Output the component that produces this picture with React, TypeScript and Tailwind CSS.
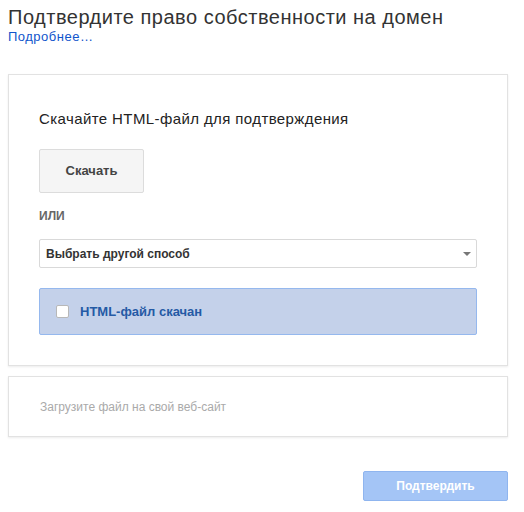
export default function App() {
  return (
    <div className="w-[524px] h-[512px] bg-white pl-2 pt-[5px] font-['Liberation_Sans',Arial,sans-serif]">
      <h1 className="text-[20px] leading-[24px] tracking-[0.5px] text-[#333] font-normal">
        Подтвердите право собственности на домен
      </h1>
      <a href="#" className="block w-fit text-[13px] leading-[16px] tracking-[0.5px] text-[#15c]">
        Подробнее…
      </a>

      <div className="mt-[29px] w-[500px] border border-[#e2e2e2] shadow-[0_1px_2px_rgba(0,0,0,0.08)] px-[30px] pt-[34px] pb-[30px]">
        <p className="text-[15px] leading-[20px] tracking-[0.4px] text-[#222]">
          Скачайте HTML-файл для подтверждения
        </p>
        <button className="mt-[20px] flex h-[44px] w-[105px] items-center justify-center rounded-[2px] border border-[#dcdcdc] bg-[#f5f5f5] text-[13px] font-bold text-[#444]">
          Скачать
        </button>
        <div className="mt-[15px] text-[12px] leading-[16px] font-bold uppercase text-[#666]">
          или
        </div>
        <div className="mt-[15px] flex h-[29px] items-center justify-between rounded-[2px] border border-[#d9d9d9] bg-white pl-[6px] pr-[5px]">
          <span className="text-[12px] font-bold text-[#333]">Выбрать другой способ</span>
          <span className="h-0 w-0 border-x-[4px] border-t-[4px] border-x-transparent border-t-[#777]" />
        </div>
        <label className="mt-[20px] flex h-[47px] items-center rounded-[2px] border border-[#95b8ee] bg-[#c4d1ea] pl-4">
          <span className="h-[13px] w-[13px] rounded-[2px] border border-[#b8b8b8] bg-white" />
          <span className="ml-[11px] text-[13px] font-bold text-[#255aa5]">HTML-файл скачан</span>
        </label>
      </div>

      <div className="mt-[10px] flex h-[61px] w-[500px] items-center border border-[#e2e2e2] shadow-[0_1px_2px_rgba(0,0,0,0.08)] px-[31px]">
        <span className="text-[12px] text-[#aaa]">Загрузите файл на свой веб-сайт</span>
      </div>

      <div className="mt-[34px] flex w-[500px] justify-end">
        <button className="flex h-[30px] w-[145px] items-center justify-center rounded-[2px] border border-[#8fb5ef] bg-[#a4c5f6] text-[12px] font-bold text-white">
          Подтвердить
        </button>
      </div>
    </div>
  );
}
